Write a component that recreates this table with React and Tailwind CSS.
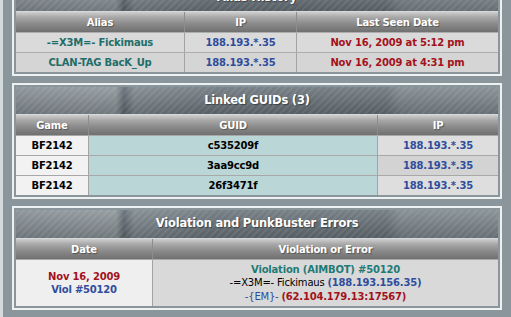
import React from 'react';

const aliases = [
  { alias: '-=X3M=- Fickimaus', ip: '188.193.*.35', seen: 'Nov 16, 2009 at 5:12 pm' },
  { alias: 'CLAN-TAG BacK_Up', ip: '188.193.*.35', seen: 'Nov 16, 2009 at 4:31 pm' },
];

const guids = [
  { game: 'BF2142', guid: 'c535209f', ip: '188.193.*.35', ipBg: 'bg-[#dedede]' },
  { game: 'BF2142', guid: '3aa9cc9d', ip: '188.193.*.35', ipBg: 'bg-[#d3d3d3]' },
  { game: 'BF2142', guid: '26f3471f', ip: '188.193.*.35', ipBg: 'bg-[#dedede]' },
];

// striped slate title bar with the lighter left "swoosh"
const titleBg =
  'bg-[image:repeating-linear-gradient(135deg,rgba(255,255,255,0.07)_0px,rgba(255,255,255,0.07)_2px,transparent_2px,transparent_5px),linear-gradient(180deg,rgba(255,255,255,0.10),rgba(0,0,0,0.18)),linear-gradient(90deg,#858e94_0px,#8b9499_100px,#5d676e_108px,#7b858c_118px,#6a747b_200px,#687279_370px,#7c868c_385px,#7e888e_100%)]';

const headBg =
  'bg-[linear-gradient(180deg,#cfcfcf_0%,#a9a9a9_25%,#8a8a8a_60%,#707070_100%)]';

const Panel = ({ title, titleH = 'h-[27px]', className = '', children }) => (
  <div className={`border-2 border-[#eef1f2] p-[2px] ${className}`}>
    <div
      className={`${titleBg} ${titleH} flex items-center justify-center text-white font-bold text-[11.5px] tracking-[-0.2px] [text-shadow:1px_1px_1px_#3b4247]`}
    >
      {title}
    </div>
    <div className="border-t border-[#d6d9db]">{children}</div>
  </div>
);

const Head = ({ w = '', last, children }) => (
  <div
    className={`${w} ${last ? 'flex-1' : 'shrink-0 border-r border-[#8d8d8d]'} h-[20px] flex items-center justify-center text-white font-bold ${headBg} [text-shadow:1px_1px_1px_#555]`}
  >
    {children}
  </div>
);

export default function App() {
  return (
    <div className="w-[511px] h-[317px] overflow-hidden bg-[#8b959c] border-l-[3px] border-[#d4d9dc] pl-[9px] pr-[9px] font-['DejaVu_Sans',sans-serif] text-[10px] tracking-[-0.2px]">
      {/* Alias History */}
      <Panel title="Alias History" className="-mt-[20px]">
        <div className="flex">
          <Head w="w-[169px]">Alias</Head>
          <Head w="w-[112px]">IP</Head>
          <Head last>Last Seen Date</Head>
        </div>
        {aliases.map((a, i) => (
          <div
            key={i}
            className={`flex h-[20px] font-bold border-t border-[#adadad] ${i === 0 ? 'bg-[#dadada]' : 'bg-[#d5d5d5]'}`}
          >
            <div className="w-[169px] shrink-0 border-r border-[#a3a3a3] flex items-center justify-center text-[#1f6e69]">
              {a.alias}
            </div>
            <div className="w-[112px] shrink-0 border-r border-[#a3a3a3] flex items-center justify-center text-[#2f4d9c]">
              {a.ip}
            </div>
            <div className="flex-1 flex items-center justify-center text-[#a3121c]">{a.seen}</div>
          </div>
        ))}
      </Panel>

      {/* Linked GUIDs */}
      <Panel title="Linked GUIDs (3)" className="mt-[7px]">
        <div className="flex">
          <Head w="w-[73px]">Game</Head>
          <Head w="w-[289px]">GUID</Head>
          <Head last>IP</Head>
        </div>
        {guids.map((g, i) => (
          <div key={i} className="flex h-[20px] font-bold border-t border-[#a8a8a8]">
            <div className="w-[73px] shrink-0 bg-[#f2f2f2] border-r border-[#a3a3a3] flex items-center justify-center text-black">
              {g.game}
            </div>
            <div className="w-[289px] shrink-0 bg-[#bad6d6] border-r border-[#a3a3a3] flex items-center justify-center text-black">
              {g.guid}
            </div>
            <div className={`flex-1 ${g.ipBg} flex items-center justify-center text-[#2f4d9c]`}>{g.ip}</div>
          </div>
        ))}
      </Panel>

      {/* Violations */}
      <Panel title="Violation and PunkBuster Errors" titleH="h-[28px]" className="mt-[7px]">
        <div className="flex">
          <Head w="w-[137px]">Date</Head>
          <Head last>Violation or Error</Head>
        </div>
        <div className="flex h-[47px] border-t border-[#a8a8a8]">
          <div className="w-[137px] shrink-0 bg-[#efefef] border-r border-[#a3a3a3] flex flex-col items-center justify-center font-bold leading-[13px]">
            <span className="text-[#a3121c]">Nov 16, 2009</span>
            <span className="text-[#2f4d9c]">Viol #50120</span>
          </div>
          <div className="flex-1 bg-[#d9d9d9] flex flex-col items-center justify-center leading-[13.5px]">
            <span className="font-bold text-[#1f7a76]">Violation (AIMBOT) #50120</span>
            <span className="text-black">
              -=X3M=- Fickimaus <span className="font-bold text-[#2f4d9c]">(188.193.156.35)</span>
            </span>
            <span className="text-[#2f4d9c]">
              -{'{'}EM{'}'}- <span className="font-bold text-[#a3121c]">(62.104.179.13:17567)</span>
            </span>
          </div>
        </div>
      </Panel>
    </div>
  );
}
